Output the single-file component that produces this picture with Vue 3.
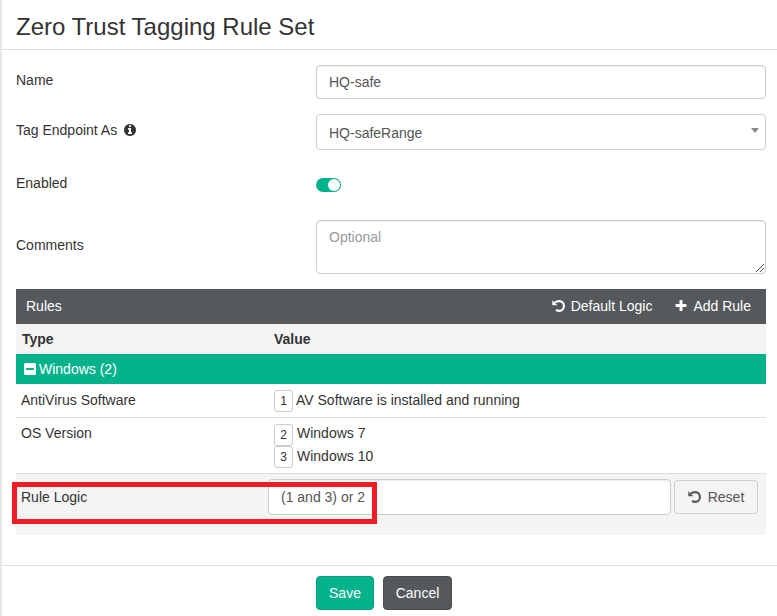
<script setup>
import { ref } from 'vue'

const name = ref('HQ-safe')
const comments = ref('')
const logic = ref('(1 and 3) or 2')
const rules = [
  { type: 'AntiVirus Software', values: [{ id: 1, text: 'AV Software is installed and running' }] },
  { type: 'OS Version', values: [{ id: 2, text: 'Windows 7' }, { id: 3, text: 'Windows 10' }] },
]
</script>

<template>
  <div class="panel">
    <h1 class="title">Zero Trust Tagging Rule Set</h1>
    <form class="form" @submit.prevent>
      <div class="row row-name">
        <label>Name</label>
        <input v-model="name" class="control" type="text" />
      </div>
      <div class="row row-tag">
        <label>Tag Endpoint As
          <svg class="icon info" viewBox="0 0 1792 1792"><path d="M1152 1376v-160q0-14-9-23t-23-9h-96v-512q0-14-9-23t-23-9h-320q-14 0-23 9t-9 23v160q0 14 9 23t23 9h96v320h-96q-14 0-23 9t-9 23v160q0 14 9 23t23 9h448q14 0 23-9t9-23zm-128-896v-160q0-14-9-23t-23-9h-192q-14 0-23 9t-9 23v160q0 14 9 23t23 9h192q14 0 23-9t9-23zm640 416q0 209-103 385.5t-279.5 279.5-385.5 103-385.5-103-279.5-279.5-103-385.5 103-385.5 279.5-279.5 385.5-103 385.5 103 279.5 279.5 103 385.5z" /></svg>
        </label>
        <div class="control select"><span>HQ-safeRange</span><i class="caret"></i></div>
      </div>
      <div class="row row-enabled">
        <label>Enabled</label>
        <div class="toggle"><span class="knob"></span></div>
      </div>
      <div class="row row-comments">
        <label>Comments</label>
        <div class="area">
          <textarea v-model="comments" class="control" placeholder="Optional"></textarea>
          <svg class="grip" viewBox="0 0 8 8"><path d="M0 8L8 0M4 8L8 4" /></svg>
        </div>
      </div>

      <section class="rules">
        <header class="bar">
          <span class="bar-title">Rules</span>
          <a class="action"><svg class="undo" viewBox="0 0 13 12"><path class="head" d="M0.3 0.3L5.4 5.2H0.8Q0.300 5.200 0.300 4.700z" /><path class="arc" d="M2.8 2.500C4 1.500 5.500 1.100 7.300 1.100C10 1.100 11.900 3.100 11.900 6C11.900 8.800 9.900 10.900 7.300 10.900C6.100 10.900 5 10.600 4 9.900" /></svg>Default Logic</a>
          <a class="action"><svg class="icon" viewBox="0 0 1792 1792"><path d="M1600 736v192q0 40-28 68t-68 28h-416v416q0 40-28 68t-68 28h-192q-40 0-68-28t-28-68v-416h-416q-40 0-68-28t-28-68v-192q0-40 28-68t68-28h416v-416q0-40 28-68t68-28h192q40 0 68 28t28 68v416h416q40 0 68 28t28 68z" /></svg>Add Rule</a>
        </header>
        <div class="columns"><span>Type</span><span>Value</span></div>
        <div class="group">
          <svg class="minus" viewBox="0 0 12 12"><path fill-rule="evenodd" d="M1.5 0h9A1.5 1.5 0 0 1 12 1.5v9a1.5 1.5 0 0 1-1.5 1.5h-9A1.5 1.5 0 0 1 0 10.500v-9A1.500 1.500 0 0 1 1.500 0zM2 5v2h8V5z" /></svg>
          <span>Windows (2)</span>
        </div>
        <div v-for="rule in rules" :key="rule.type" class="rule" :class="{ multi: rule.values.length > 1 }">
          <span class="rule-type">{{ rule.type }}</span>
          <div class="values">
            <div v-for="v in rule.values" :key="v.id" class="value">
              <b class="num">{{ v.id }}</b><span>{{ v.text }}</span>
            </div>
          </div>
        </div>
        <div class="logic">
          <span class="logic-label">Rule Logic</span>
          <input v-model="logic" class="control" type="text" />
          <button class="reset" type="button"><svg class="undo" viewBox="0 0 13 12"><path class="head" d="M0.3 0.3L5.4 5.2H0.8Q0.300 5.200 0.300 4.700z" /><path class="arc" d="M2.8 2.500C4 1.500 5.500 1.100 7.300 1.100C10 1.100 11.900 3.100 11.900 6C11.900 8.800 9.900 10.900 7.300 10.900C6.100 10.900 5 10.600 4 9.900" /></svg>Reset</button>
          <div class="highlight"></div>
        </div>
      </section>
    </form>
    <footer class="footer">
      <button class="btn save" type="button">Save</button>
      <button class="btn cancel" type="button">Cancel</button>
    </footer>
    <i class="edge-mark"></i>
  </div>
</template>

<style>
body { margin: 0; background: #fff; }
</style>

<style scoped>
* { box-sizing: border-box; }
.panel {
  position: relative;
  width: 777px;
  height: 616px;
  overflow: hidden;
  border-left: 2px solid #e6e6e6;
  font: 14px/20px "Liberation Sans", Arial, sans-serif;
  color: #333;
}
.edge-mark { position: absolute; left: -2px; top: 216px; width: 1px; height: 36px; background: #a3d9c9; }
.title {
  margin: 0;
  height: 50px;
  padding: 11px 14px 0;
  border-bottom: 1px solid #ddd;
  font-size: 24px;
  line-height: 32px;
  font-weight: 400;
}
.form { height: 515px; padding: 15px 11px 0 14px; }
.row { display: grid; grid-template-columns: 300px 450px; align-items: start; }
.row label { display: flex; align-items: center; }
.row-name { height: 49px; }
.row-name label { padding-top: 5px; }
.row-tag { height: 63px; }
.row-tag label { padding-top: 6px; }
.row-enabled { height: 43px; }
.row-enabled label { margin-top: -4px; }
.row-comments { height: 69px; }
.row-comments label { padding-top: 15px; }
.icon { width: 14px; height: 14px; fill: currentColor; flex: none; }
.undo { width: 13px; height: 12px; flex: none; margin-right: 1px; overflow: visible; }
.head { fill: currentColor; }
.arc { fill: none; stroke: currentColor; stroke-width: 2.1; }
.info { margin-left: 6px; }
.control {
  display: block;
  width: 100%;
  height: 34px;
  margin: 0;
  padding: 0 12px;
  border: 1px solid #ccc;
  border-radius: 4px;
  background: #fff;
  box-shadow: inset 0 1px 1px rgba(0, 0, 0, 0.075);
  color: #555;
  font: inherit;
  outline: none;
}
.select { display: flex; align-items: center; justify-content: space-between; height: 36px; padding: 1px 6px 0 12px; box-shadow: none; }
.caret { margin-top: -5px; border: 4px solid transparent; border-top: 5px solid #888; border-bottom: 0; }
.toggle { display: flex; justify-content: flex-end; align-items: center; width: 25px; height: 14px; padding: 1px; border-radius: 7px; background: #04b28c; margin-top: 1px; }
.knob { width: 12px; height: 12px; border-radius: 50%; background: #fff; }
.area { position: relative; }
textarea.control { height: 54px; padding: 6px 12px; resize: none; overflow: hidden; }
textarea::placeholder { color: #999; opacity: 1; }
.grip { position: absolute; right: 2px; bottom: 2px; width: 8px; height: 8px; fill: none; stroke: #444; stroke-width: 0.9; }
.rules { width: 750px; }
.bar { display: flex; align-items: center; height: 35px; padding: 0 15px 1px 10px; background: #55595c; color: #fff; }
.bar-title { flex: 1; }
.action { display: flex; align-items: center; gap: 5px; margin-left: 22px; }
.columns { display: grid; grid-template-columns: 252px 1fr; align-items: center; height: 30px; padding-left: 6px; background: #f4f4f4; font-weight: 700; }
.group { display: flex; align-items: center; gap: 3px; height: 30px; padding-left: 8px; background: #04b28c; color: #fff; }
.minus { width: 12px; height: 12px; fill: #fff; }
.rule { display: grid; grid-template-columns: 253px 1fr; padding: 6px 0 5px 5px; border-bottom: 1px solid #ddd; }
.value { display: flex; align-items: flex-start; height: 22px; gap: 3px; }
.rule.multi { padding-top: 5px; }
.multi .values { padding-top: 1px; }
.multi .value { gap: 4px; }
.multi .value span { margin-top: -1px; }
.multi .value + .value span { margin-top: 0; }
.num { width: 19px; height: 22px; border: 1px solid #ccc; border-radius: 3px; background: #fff; font-size: 12px; line-height: 20px; text-align: center; font-weight: 400; }
.logic { position: relative; display: grid; grid-template-columns: 247px 403px 87px; height: 61px; padding: 5px 0 0 5px; background: #f4f4f4; align-items: start; }
.logic-label { padding-top: 8px; }
.logic .control { height: 36px; }
.reset { display: flex; align-items: center; justify-content: center; gap: 6px; width: 84px; height: 34px; margin: 1px 0 0 3px; padding: 0; border: 1px solid #ccc; border-radius: 4px; background: #f4f4f4; color: #555; font: inherit; }
.highlight { position: absolute; left: -4px; top: 8px; width: 365px; height: 42px; border: 5px solid #ee1c25; }
.footer { display: flex; gap: 9px; height: 51px; padding: 10px 0 0 314px; border-top: 1px solid #ddd; }
.btn { height: 34px; padding: 0; border: 1px solid; border-radius: 4px; color: #fff; font: inherit; }
.save { width: 58px; background: #04b28c; border-color: #04a17e; }
.cancel { width: 69px; background: #55595c; border-color: #494c4f; }
</style>
